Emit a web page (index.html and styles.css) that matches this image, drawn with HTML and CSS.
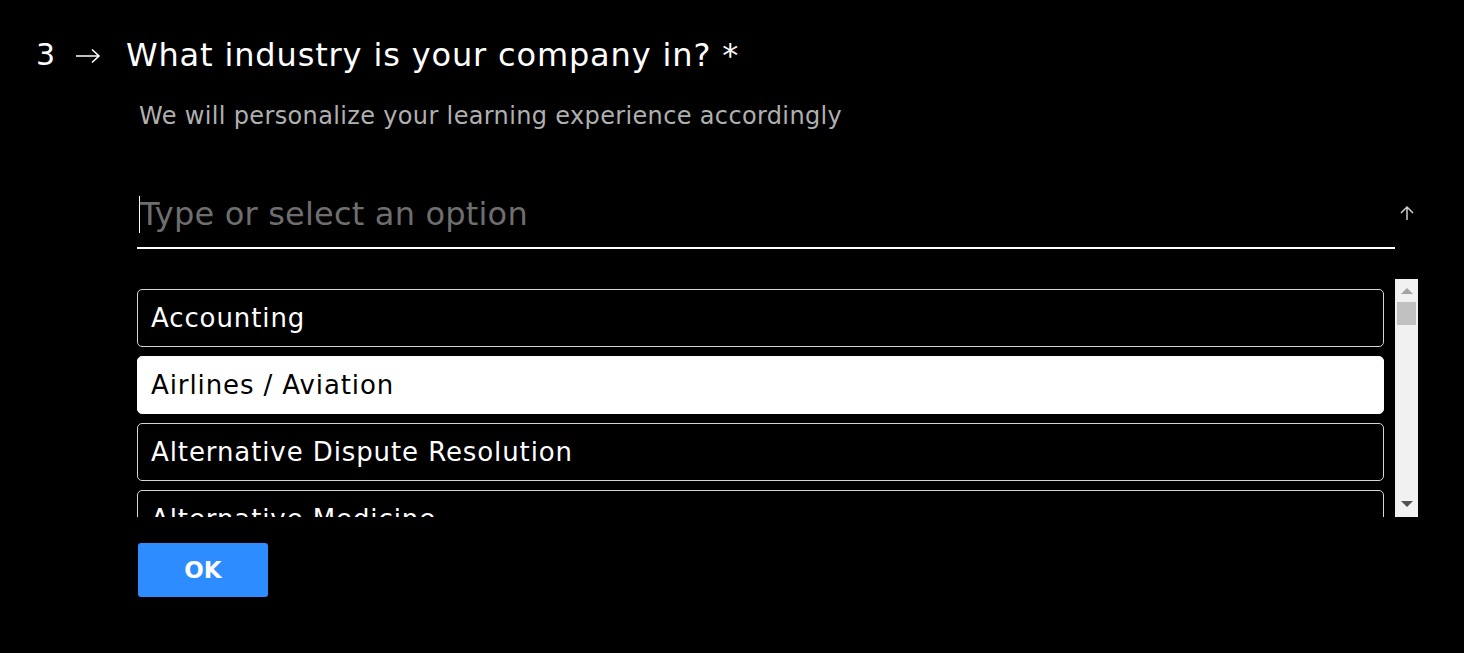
FILE: index.html
```html
<!DOCTYPE html>
<html>
<head>
<meta charset="utf-8">
<link rel="stylesheet" href="styles.css">
</head>
<body>
<div class="page">
  <div class="qhead">
    <span class="qnum">3</span>
    <svg class="qarrow" width="26" height="16" viewBox="0 0 26 16"><path d="M1 8 H24 M17 1.5 L24 8 L17 14.5" fill="none" stroke="#fff" stroke-width="1.6"/></svg>
    <h1 class="qtitle">What industry is your company in? *</h1>
  </div>
  <div class="qcontent">
    <p class="desc">We will personalize your learning experience accordingly</p>
    <div class="inputrow">
      <div class="field"><span class="caret"></span><span class="placeholder">Type or select an option</span></div>
      <svg class="upicon" width="16" height="16" viewBox="0 0 16 16"><path d="M8 15 V2 M2 8 L8 2 L14 8" fill="none" stroke="#cfcfcf" stroke-width="1.5"/></svg>
    </div>
    <div class="listwrap">
      <div class="list">
        <div class="item">Accounting</div>
        <div class="item selected">Airlines / Aviation</div>
        <div class="item">Alternative Dispute Resolution</div>
        <div class="item">Alternative Medicine</div>
      </div>
      <div class="scrollbar">
        <span class="tri up"></span>
        <span class="thumb"></span>
        <span class="spacer"></span>
        <span class="tri down"></span>
      </div>
    </div>
    <button class="ok">OK</button>
  </div>
</div>
</body>
</html>
```

FILE: styles.css
```css
html, body {
  margin: 0;
  padding: 0;
  background: #000;
}
body {
  font-family: "DejaVu Sans", sans-serif;
  color: #fff;
}
.page {
  padding-top: 34px;
  width: 1464px;
  height: 653px;
  box-sizing: border-box;
}
.qhead {
  display: flex;
  align-items: center;
  height: 42px;
}
.qnum {
  margin-left: 36px;
  font-size: 30px;
  line-height: 42px;
  width: 39px;
}
.qarrow {
  display: block;
  margin-right: 25px;
  margin-top: 2px;
}
.qtitle {
  margin: 0;
  font-size: 32px;
  font-weight: normal;
  line-height: 42px;
  letter-spacing: 0.85px;
}
.qcontent {
  padding-left: 137px;
  width: 1281px;
}
.desc {
  margin: 24px 0 0 2px;
  font-size: 24px;
  line-height: 32px;
  color: #b0b0b0;
  letter-spacing: 0.35px;
}
.inputrow {
  display: flex;
  align-items: flex-start;
  margin-top: 59px;
}
.field {
  width: 1258px;
  height: 58px;
  border-bottom: 2px solid #fff;
  display: flex;
  align-items: center;
  box-sizing: border-box;
  padding-bottom: 10px;
}
.caret {
  display: block;
  width: 1px;
  height: 37px;
  background: #fff;
  margin-left: 2px;
}
.placeholder {
  font-size: 32px;
  color: #6e6e6e;
  line-height: 40px;
  letter-spacing: 0.2px;
}
.upicon {
  display: block;
  margin-left: 4px;
  margin-top: 14px;
}
.listwrap {
  display: flex;
  margin-top: 30px;
  height: 238px;
}
.list {
  width: 1247px;
  overflow: hidden;
  padding-top: 10px;
  display: flex;
  flex-direction: column;
  gap: 9px;
}
.item {
  flex: none;
  height: 58px;
  box-sizing: border-box;
  border: 1px solid #d6d6d6;
  border-radius: 5px;
  padding-left: 13px;
  display: flex;
  align-items: center;
  font-size: 26px;
  letter-spacing: 0.9px;
  color: #fff;
}
.item.selected {
  background: #fff;
  color: #000;
  border-color: #fff;
}
.scrollbar {
  margin-left: 11px;
  width: 23px;
  background: #f1f1f1;
  display: flex;
  flex-direction: column;
  align-items: center;
}
.tri {
  width: 0;
  height: 0;
  border-left: 6px solid transparent;
  border-right: 6px solid transparent;
}
.tri.up {
  margin-top: 9px;
  border-bottom: 6px solid #a3a3a3;
}
.tri.down {
  margin-bottom: 10px;
  border-top: 6px solid #505050;
}
.thumb {
  margin-top: 8px;
  width: 19px;
  height: 23px;
  background: #c1c1c1;
}
.spacer {
  flex: 1;
}
.ok {
  display: block;
  margin: 26px 0 0 1px;
  width: 130px;
  height: 54px;
  border: none;
  border-radius: 3px;
  background: #2d8cff;
  color: #fff;
  font-family: "DejaVu Sans", sans-serif;
  font-weight: bold;
  font-size: 23px;
  padding: 0;
}
```
